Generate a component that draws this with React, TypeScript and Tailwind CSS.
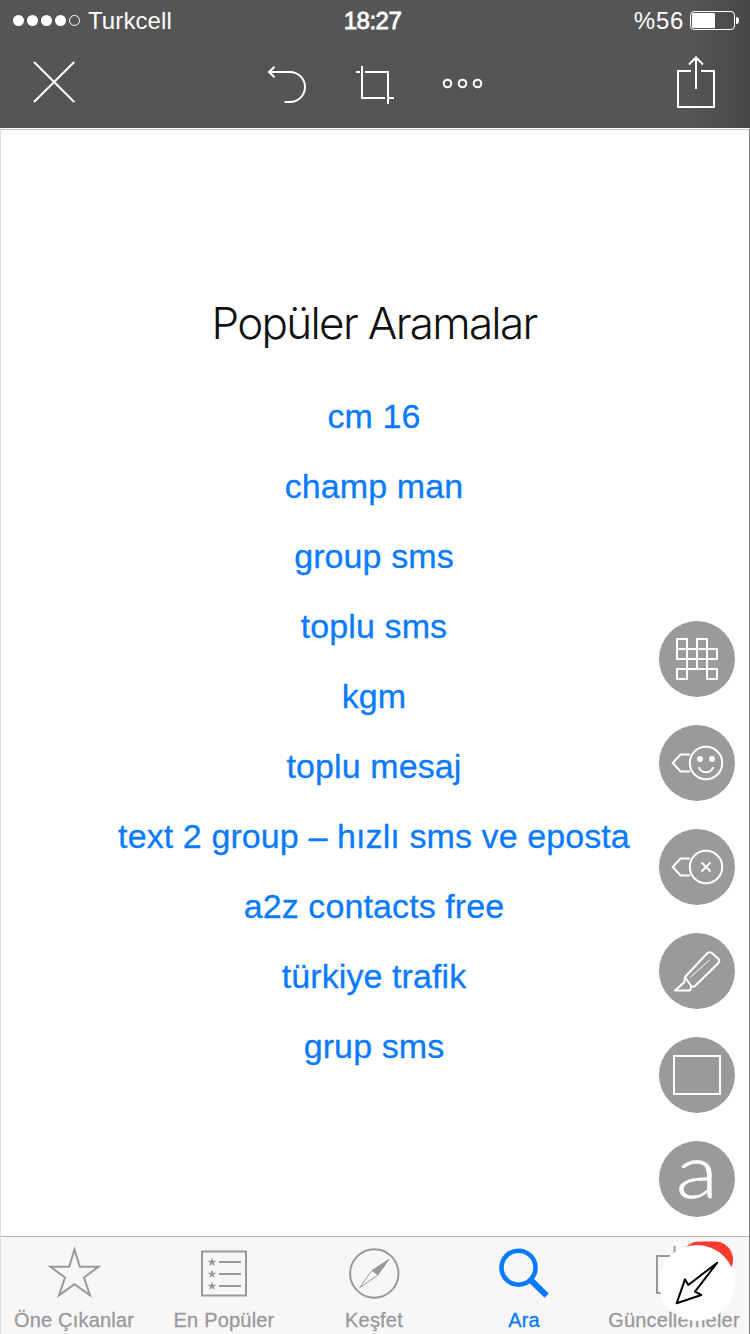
import type React from "react";

const searches = [
  "cm 16",
  "champ man",
  "group sms",
  "toplu sms",
  "kgm",
  "toplu mesaj",
  "text 2 group – hızlı sms ve eposta",
  "a2z contacts free",
  "türkiye trafik",
  "grup sms",
];

function StatusBar() {
  return (
    <div className="grid grid-cols-3 items-center h-[41px] pl-[13px] pr-[11px] text-2xl leading-none">
      <div className="flex items-center">
        <div className="flex gap-[3px] mr-2">
          <span className="size-[11px] rounded-full bg-white" />
          <span className="size-[11px] rounded-full bg-white" />
          <span className="size-[11px] rounded-full bg-white" />
          <span className="size-[11px] rounded-full bg-white" />
          <span className="size-[11px] rounded-full border border-white" />
        </div>
        <span className="tracking-[0.1px]">Turkcell</span>
      </div>
      <span className="pr-[7px] text-center tracking-[-0.5px] [-webkit-text-stroke:0.8px_white]">
        18:27
      </span>
      <div className="flex items-center justify-end">
        <span className="mr-[6px] tracking-[0.7px]">%56</span>
        <div className="w-[45px] h-[19px] p-px rounded-[4px] border border-white">
          <div className="w-[23px] h-full rounded-[1px] bg-white" />
        </div>
        <span className="w-[3px] h-[7px] ml-px rounded-r-full bg-white" />
      </div>
    </div>
  );
}

function Toolbar() {
  return (
    <div className="flex h-[87px] pl-[33px] pr-[33px]">
      <button aria-label="Close" className="mt-5 h-[42px]">
        <svg width="43" height="42" fill="none" stroke="white" strokeWidth="2" strokeLinecap="round">
          <path d="M1.5 1.5 40.7 40.5M40.7 1.5 1.5 40.5" />
        </svg>
      </button>
      <button aria-label="Undo" className="mt-6 ml-[191px] h-[40px]">
        <svg width="40" height="40" fill="none" stroke="white" strokeWidth="2">
          <path d="M2.5 7H23a15 15 0 0 1 0 30h-5.5" />
          <path d="M7.5 1.8 2 7l5.5 5.2" />
        </svg>
      </button>
      <button aria-label="Crop" className="mt-6 ml-[49px] h-[40px]">
        <svg width="38" height="40" fill="none" stroke="white" strokeWidth="2">
          <path d="M6 1V33H29M33 33h5M0 7H4M9 7H32V39" />
        </svg>
      </button>
      <button aria-label="More" className="mt-[37px] ml-12 h-[11px]">
        <svg width="42" height="11" fill="none" stroke="white" strokeWidth="2">
          <circle cx="5.5" cy="5.5" r="3.8" />
          <circle cx="20.5" cy="5.5" r="3.8" />
          <circle cx="35.5" cy="5.5" r="3.8" />
        </svg>
      </button>
      <button aria-label="Share" className="mt-[15px] ml-auto h-[52px]">
        <svg width="41" height="52" fill="none" stroke="white" strokeWidth="2">
          <path d="M15 15H2V51H38V15H25" />
          <path d="M20 1.5V33M13 8.5l7-7 7 7" />
        </svg>
      </button>
    </div>
  );
}

function ToolButton({
  label,
  white = false,
  children,
}: {
  label: string;
  white?: boolean;
  children: React.ReactNode;
}) {
  return (
    <button
      aria-label={label}
      className={
        white
          ? "flex items-center justify-center size-[76px] rounded-full bg-white text-black"
          : "flex items-center justify-center size-[76px] rounded-full bg-[#9a9a9a] text-white"
      }
    >
      {children}
    </button>
  );
}

function ToolIcon({ children }: { children: React.ReactNode }) {
  return (
    <svg
      width="76"
      height="76"
      viewBox="0 0 76 76"
      fill="none"
      stroke="currentColor"
      strokeWidth="2"
    >
      {children}
    </svg>
  );
}

function Tools() {
  return (
    <div className="absolute top-[621px] right-[15px] flex flex-col gap-7">
      <ToolButton label="Pixelate">
        <ToolIcon>
          <path d="M18 18h10v10H18zM38 18h10v10H38zM18 28h40v10H18zM28 28v20h20V28M38 28v20M18 48h10v10H18zM48 48h10v10H48z" />
        </ToolIcon>
      </ToolButton>
      <ToolButton label="Emoji stamp">
        <ToolIcon>
          <circle cx="47" cy="38" r="16.2" />
          <path d="M31 29.5h-9.5L13.7 38l7.8 8.5H31" />
          <circle cx="41" cy="34" r="3" fill="currentColor" stroke="none" />
          <circle cx="53" cy="34" r="3" fill="currentColor" stroke="none" />
          <path d="M39.7 42c2.5 7 12 7 14.5 0" />
        </ToolIcon>
      </ToolButton>
      <ToolButton label="Stamp">
        <ToolIcon>
          <circle cx="47" cy="38" r="16.2" />
          <path d="M31 29.5h-9.5L13.7 38l7.8 8.5H31" />
          <path d="m42.5 33.5 9 9M51.5 33.5l-9 9" />
        </ToolIcon>
      </ToolButton>
      <ToolButton label="Highlighter">
        <ToolIcon>
          <path
            d="M26 44 48 20.5q2.5-2.5 5.5 0l5.5 5q2.5 2.5 0 5L35.5 53.5h-3Z"
            strokeLinejoin="round"
          />
          <path d="m26 44-.7 5.3L16 57.5h15l1.5-4" strokeLinejoin="round" />
          <path d="M31 44.5 50.5 27" strokeWidth="1" />
        </ToolIcon>
      </ToolButton>
      <ToolButton label="Rectangle">
        <ToolIcon>
          <rect x="15" y="19" width="46" height="38" />
        </ToolIcon>
      </ToolButton>
      <ToolButton label="Text">
        <span className="-mt-[19px] font-[Lato] font-light text-[74px] leading-[76px] scale-x-[1.18] [-webkit-text-stroke:0.4px_white]">
          a
        </span>
      </ToolButton>
      <ToolButton label="Arrow" white>
        <ToolIcon>
          <path
            d="M58.2 17.7 29.3 40 26 34.3 17.7 58.2 42.3 50 36 46.7Z"
            strokeLinejoin="round"
          />
        </ToolIcon>
      </ToolButton>
    </div>
  );
}

function Tab({
  label,
  active = false,
  children,
}: {
  label: string;
  active?: boolean;
  children: React.ReactNode;
}) {
  return (
    <div
      className={
        active
          ? "flex flex-col items-center w-[150px] shrink-0 pt-[6px] text-[#0a7aff]"
          : "flex flex-col items-center w-[150px] shrink-0 pt-[6px] text-[#999]"
      }
    >
      <svg
        width="60"
        height="60"
        fill="none"
        stroke="currentColor"
        strokeWidth="2"
        className="overflow-visible"
      >
        {children}
      </svg>
      <span className="mt-[5px] text-xl leading-6 tracking-[0.2px] whitespace-nowrap [-webkit-text-stroke:0.3px_currentColor]">
        {label}
      </span>
    </div>
  );
}

function ListRow({ y }: { y: number }) {
  return (
    <g transform={`translate(18 ${y})`}>
      <path
        d="M0-4.5 1.1-1.3H4.5L1.8.7 2.8 4 0 2-2.8 4-1.8.7-4.5-1.3H-1.1Z"
        fill="currentColor"
        stroke="none"
      />
      <path d="M7 0H29" />
    </g>
  );
}

function TabBar() {
  return (
    <nav className="flex h-[98px] -ml-[2px] border-t border-[#b4b4b4] bg-[#f7f7f7]">
      <Tab label="Öne Çıkanlar">
        <path d="M30.5 6.5 35.8 23.8H54.5L40 34.5 46 52.3 30.5 41.3 15 52.3 21 34.5 6.5 23.8H25.2Z" />
      </Tab>
      <Tab label="En Popüler">
        <rect x="8" y="8.5" width="44" height="44" />
        <ListRow y={19} />
        <ListRow y={31} />
        <ListRow y={43} />
      </Tab>
      <Tab label="Keşfet">
        <circle cx="30.3" cy="30.5" r="24.2" />
        <path d="M45 16.3 27.7 27.7 15.7 44.7 33.7 32.3Z" strokeWidth="1" />
        <path d="M45 16.3 27.7 27.7 33.7 32.3Z" fill="currentColor" stroke="none" />
      </Tab>
      <Tab label="Ara" active>
        <circle cx="24.5" cy="24.7" r="17" strokeWidth="4.6" />
        <path d="M36.2 36.5 52.7 52.7" strokeWidth="6" />
      </Tab>
      <Tab label="Güncellemeler">
        <path d="M26 13H13V50H49V13H36M30.5 3V33" />
        <rect x="37" y="-1.5" width="52" height="36" rx="18" fill="#ff3b30" stroke="none" />
      </Tab>
    </nav>
  );
}

function App() {
  return (
    <div className="relative flex flex-col w-[750px] h-[1334px] overflow-hidden bg-white font-['Liberation_Sans',Arial,sans-serif]">
      <header className="shrink-0 text-white bg-linear-to-r from-[#555556] from-92% to-[#474747]">
        <StatusBar />
        <Toolbar />
      </header>

      <div className="flex flex-col flex-1 mt-px border-t border-l border-r border-t-[#c4c4c4] border-l-[#dedede] border-r-[#7c7c7c] overflow-hidden">
        <main className="flex flex-col flex-1 items-center pt-[163px] pr-[2px]">
          <h1 className="mb-7 font-[Inter] font-light text-[44px] leading-[60px] tracking-[-1.7px] text-[#111]">
            Popüler Aramalar
          </h1>
          {searches.map((term) => (
            <a
              key={term}
              className="h-[70px] text-[34px] leading-[70px] tracking-[0.1px] text-[#0a7aff] [-webkit-text-stroke:0.3px_currentColor]"
            >
              {term}
            </a>
          ))}
        </main>
        <TabBar />
      </div>

      <Tools />
    </div>
  );
}

export default App;
